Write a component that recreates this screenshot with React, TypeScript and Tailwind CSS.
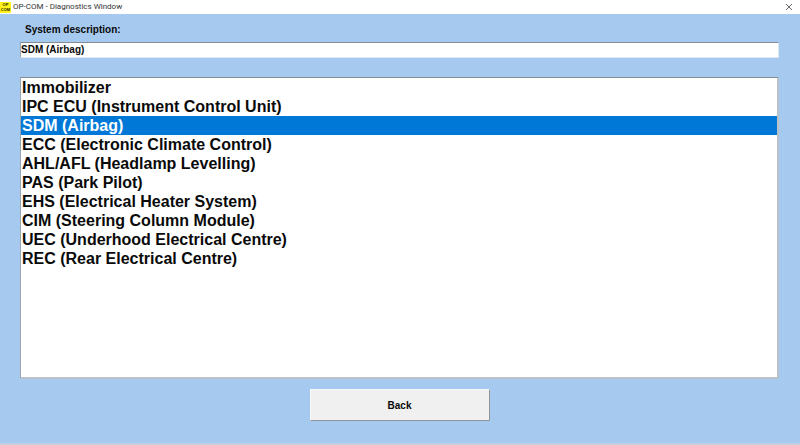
import React, { useState } from 'react';

const SYSTEMS = [
  'Immobilizer',
  'IPC ECU (Instrument Control Unit)',
  'SDM (Airbag)',
  'ECC (Electronic Climate Control)',
  'AHL/AFL (Headlamp Levelling)',
  'PAS (Park Pilot)',
  'EHS (Electrical Heater System)',
  'CIM (Steering Column Module)',
  'UEC (Underhood Electrical Centre)',
  'REC (Rear Electrical Centre)',
];

const TitleBar: React.FC = () => (
  <header className="flex h-[14px] items-center justify-between bg-white pr-[7px] font-normal">
    <div className="flex items-center gap-[2px]">
      <div className="flex h-[11px] w-[11px] flex-col items-center justify-center bg-[#fff21a] font-['Liberation_Sans',sans-serif] text-[4px] font-bold leading-[5px] text-[#1c1a00]">
        <span>OP</span>
        <span>COM</span>
      </div>
      <h1 className="whitespace-nowrap font-[Roboto,sans-serif] text-[8px] leading-[14px] text-[#333333]">
        OP-COM - Diagnostics Window
      </h1>
    </div>
    <button type="button" aria-label="Close" className="flex h-[14px] items-center">
      <svg viewBox="0 0 8 8" className="size-2" fill="none" stroke="#555555" strokeWidth="0.9">
        <path d="M1 1l6 6M7 1L1 7" />
      </svg>
    </button>
  </header>
);

export default function App() {
  const [selected, setSelected] = useState('SDM (Airbag)');

  return (
    <div className="flex min-h-screen flex-col border-b-2 border-[#c3cfda] bg-[#a6c9ef] font-['Liberation_Sans',Arial,sans-serif] font-bold text-[#0a0a0a]">
      <TitleBar />

      <main className="flex flex-1 flex-col pb-[22px] pl-5 pr-[21px] pt-[9px]">
        <label htmlFor="description" className="pl-[5px] text-[10px] leading-[14px]">
          System description:
        </label>
        <input
          id="description"
          readOnly
          value={selected}
          className="mt-[5px] h-4 w-full border border-b-[#dfe8f1] border-l-[#a0a6ad] border-r-[#dfe8f1] border-t-[#868c94] bg-white pb-[2px] text-[10px] leading-3 outline-none"
        />

        <ul className="mt-[19px] flex-1 border border-b-2 border-r-2 border-b-[#b9c1c9] border-l-[#a0a6ad] border-r-[#b9c1c9] border-t-[#868c94] bg-white">
          {SYSTEMS.map((system) => (
            <li key={system}>
              <button
                type="button"
                aria-pressed={system === selected}
                onClick={() => setSelected(system)}
                className={`block w-full px-px text-left text-[16px] leading-[19px] ${
                  system === selected ? 'bg-[#0078d7] text-white' : 'bg-white'
                }`}
              >
                {system}
              </button>
            </li>
          ))}
        </ul>

        <button
          type="button"
          className="mt-[10px] h-8 w-[180px] self-center border border-b-[#8e9499] border-l-[#f8f8f8] border-r-[#8e9499] border-t-[#f8f8f8] bg-[#f0f0f0] text-[10px]"
        >
          Back
        </button>
      </main>
    </div>
  );
}
